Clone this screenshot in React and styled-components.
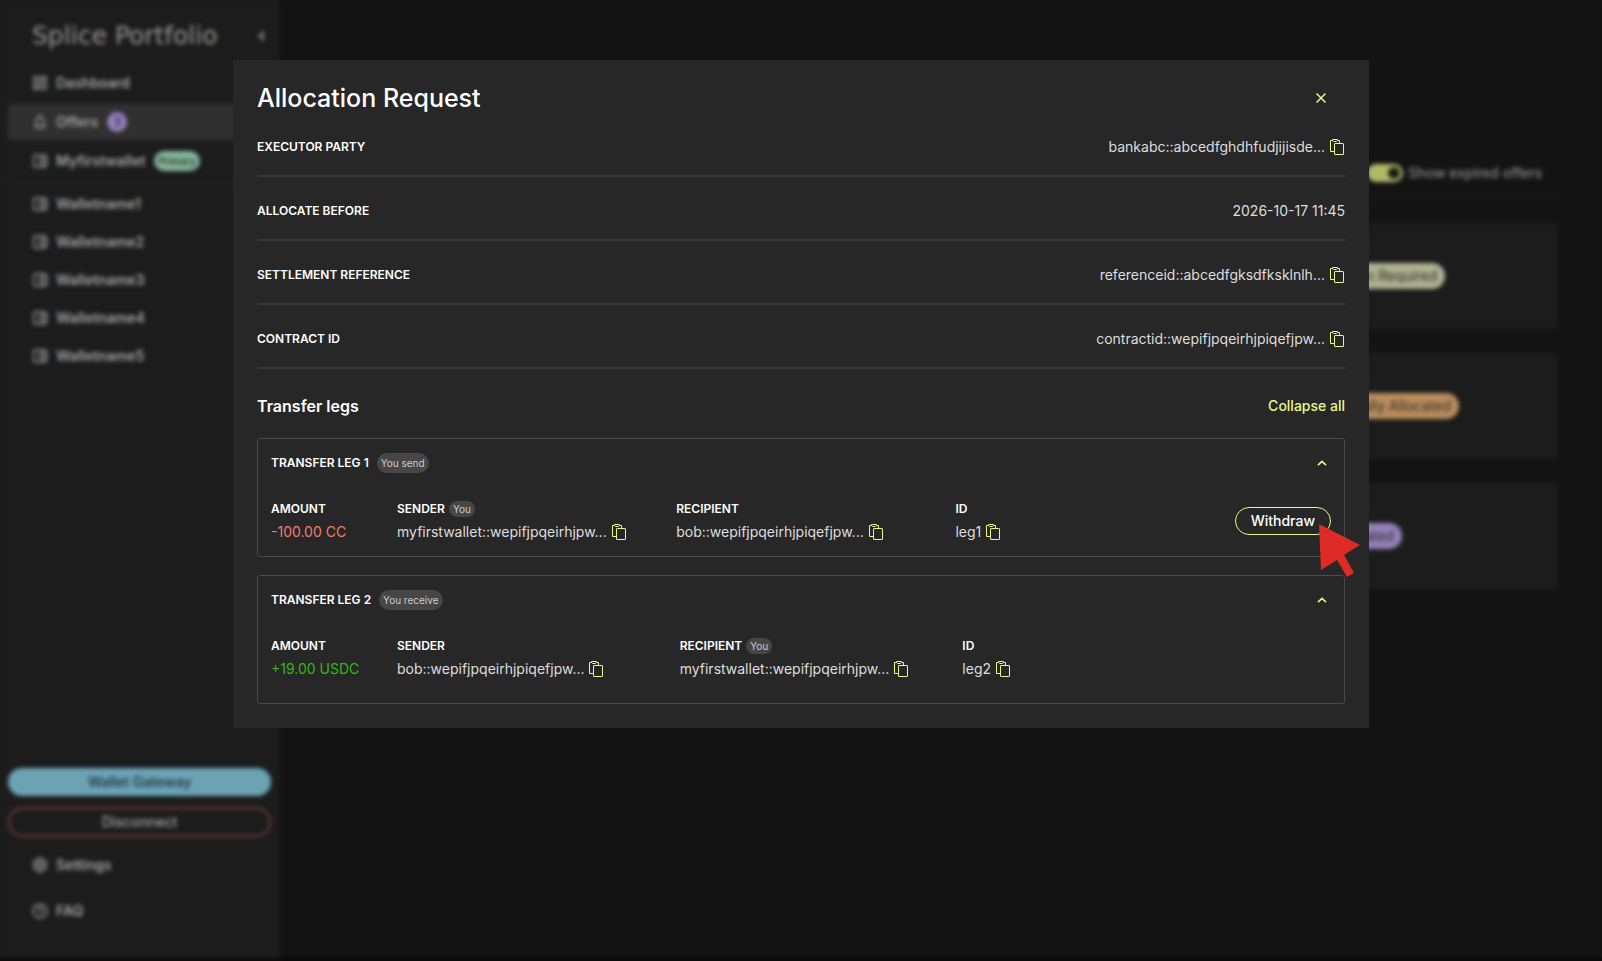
import { useState } from 'react';
import styled, { createGlobalStyle } from 'styled-components';
import {
  MdOutlineDashboard,
  MdNotificationsNone,
  MdOutlineAccountBalanceWallet,
  MdOutlineSettings,
  MdHelpOutline,
} from 'react-icons/md';

const GlobalStyle = createGlobalStyle`
  * {
    box-sizing: border-box;
  }
  body {
    margin: 0;
    background: #0b090a;
    font-family: Inter, "Liberation Sans", sans-serif;
    font-size: 14px;
    line-height: 20px;
    color: #ffffff;
  }
  button {
    font: inherit;
    color: inherit;
    background: none;
    border: none;
    padding: 0;
    cursor: pointer;
  }
  h1, h2, h3, dl, dd {
    margin: 0;
  }
`

// page behind the dialog
const Layout = styled.div`
  display: flex;
  height: 100vh;
  padding-bottom: 3px;
  overflow: hidden;
`
const Sidebar = styled.nav`
  display: flex;
  flex-direction: column;
  flex: 0 0 279px;
  padding: 20px 8px 27px;
  background: #1c1c1c;
  color: #a0a0a0;
`
const Brand = styled.div`
  display: flex;
  justify-content: space-between;
  align-items: center;
  height: 32px;
  margin-bottom: 13px;
  padding: 0 4px 0 24px;
  font-family: "DejaVu Sans", sans-serif;
  font-size: 25px;
  white-space: nowrap;
  color: #949494;
`
const NavItem = styled.a`
  display: flex;
  align-items: center;
  gap: 7px;
  height: 36px;
  margin-bottom: ${props => props.$gap || 2}px;
  padding-left: 23px;
  border-radius: 4px;
  background: ${props => (props.$active ? '#303030' : 'transparent')};
  color: inherit;
  font-weight: 600;
  text-decoration: none;

  svg {
    width: 18px;
    height: 18px;
  }
`
const Count = styled.span`
  width: 20px;
  height: 20px;
  margin-left: 2px;
  border-radius: 10px;
  background: #9480bb;
  color: #33294a;
  font-size: 12px;
  font-weight: 500;
  text-align: center;
`
const Primary = styled.span`
  margin-left: 2px;
  padding: 0 4px;
  border-radius: 10px;
  background: #84b399;
  color: #26382e;
  font-size: 10px;
  font-weight: 500;
`
const Divider = styled.hr`
  width: 100%;
  margin: 0 0 2px;
  border: none;
  border-top: 1px solid #2b2b2b;
`
const Spacer = styled.div`
  flex: 1;
`
const WideButton = styled.button`
  flex: none;
  height: ${props => (props.$outline ? 30 : 28)}px;
  margin-bottom: ${props => (props.$outline ? 10 : 11)}px;
  border-radius: 15px;
  border: ${props => (props.$outline ? '2px solid #6e3b36' : 'none')};
  background: ${props => (props.$outline ? 'transparent' : '#6ba3b5')};
  color: ${props => (props.$outline ? '#a0a0a0' : '#1f343b')};
  font-weight: 500;
`
const Main = styled.main`
  flex: 1;
  padding: 160px 44px 0;
  background: #131313;
`
const Filters = styled.div`
  display: flex;
  justify-content: flex-end;
  height: 39px;
  padding-right: 16px;
  border-bottom: 1px solid #222222;
  color: #858585;
`
const ToggleLabel = styled.label`
  display: flex;
  align-items: center;
  gap: 5px;
  height: 26px;
  font-weight: 500;
`
const Toggle = styled.input`
  appearance: none;
  width: 36px;
  height: 18px;
  margin: 0;
  padding: 3px;
  border-radius: 9px;
  background: #b0b968;

  &::before {
    content: '';
    display: block;
    width: 12px;
    height: 12px;
    margin-left: auto;
    border-radius: 6px;
    background: #1b1c12;
  }
`
const Offer = styled.article`
  display: flex;
  justify-content: flex-end;
  height: 106px;
  margin-top: 24px;
  padding-top: 15px;
  border-radius: 4px;
  background: #1c1c1c;
`
const OfferStatus = styled.div`
  flex: 0 0 234px;
  color: #a0a0a0;
  font-weight: 600;
`
const StatusChip = styled.span`
  display: block;
  width: fit-content;
  margin-top: 5px;
  padding: 3px 8px;
  border-radius: 13px;
  background: ${props => props.$color};
  color: #33312b;
  font-weight: 400;
`

// dialog
const Overlay = styled.div`
  position: fixed;
  inset: 0;
  padding: 60px 24px;
  backdrop-filter: blur(2px);
  overflow: auto;
`
const Modal = styled.section`
  max-width: 1136px;
  margin: 0 auto;
  padding: 22px 24px 24px;
  background: #272727;
`
const ModalHeader = styled.header`
  display: flex;
  justify-content: space-between;
  align-items: center;
  height: 32px;
  padding-right: 16px;
`
const Title = styled.h1`
  font-size: 25px;
  font-weight: 500;
  line-height: 32px;
`
const IconButton = styled.button`
  display: flex;
  align-items: center;
  justify-content: center;
  width: 16px;
  height: 16px;
  color: #e7f98a;
`
const Fields = styled.dl`
  margin-top: 1px;
`
const Field = styled.div`
  display: flex;
  justify-content: space-between;
  align-items: center;
  height: 64px;
  padding-top: 6px;
  border-bottom: 2px solid #383838;

  &:first-child {
    height: 62px;
    padding-top: 4px;
  }
`
const Label = styled.dt`
  display: flex;
  align-items: center;
  gap: 4px;
  height: 20px;
  font-size: 12px;
  font-weight: 600;
  text-transform: uppercase;
`
const Value = styled.dd`
  display: flex;
  align-items: center;
  gap: 4px;
  color: ${props => props.$color || '#dedede'};
  white-space: nowrap;
`
const LegsHeader = styled.div`
  display: flex;
  justify-content: space-between;
  align-items: center;
  padding: 27px 0 22px;
`
const SubTitle = styled.h2`
  font-size: 16px;
  font-weight: 600;
  line-height: 20px;
`
const TextButton = styled.button`
  color: #e7f98a;
  font-weight: 500;
`
const Leg = styled.article`
  padding: 14px 13px ${props => (props.$roomy ? 24 : 14)}px;
  border: 1px solid #4a4a4a;
  border-radius: 3px;

  & + & {
    margin-top: 18px;
  }
`
const LegHeader = styled.header`
  display: flex;
  align-items: center;
  gap: 8px;
  height: 20px;
`
const LegName = styled.h3`
  font-size: 12px;
  font-weight: 600;
  text-transform: uppercase;
`
const Chip = styled.span`
  padding: 0 4px;
  border-radius: 10px;
  background: #464646;
  color: #cccccc;
  font-size: 10px;
  font-weight: 400;
  line-height: ${props => (props.$small ? 16 : 20)}px;
  text-transform: none;
`
const Collapse = styled(IconButton)`
  width: 18px;
  margin-left: auto;
`
const LegDetails = styled.dl`
  display: grid;
  grid-template-columns: 110px repeat(3, 1fr) minmax(86px, auto);
  column-gap: 16px;
  align-items: center;
  margin-top: 26px;
`
const Detail = styled.div`
  display: grid;
  row-gap: 3px;
`
const Action = styled.div`
  position: relative;
`
const Withdraw = styled.button`
  display: block;
  height: 28px;
  padding: 0 15px;
  border: 1px solid #e7f98a;
  border-radius: 14px;
  font-weight: 500;
`
const Pointer = styled.svg`
  position: absolute;
  left: 84px;
  top: 17px;
  width: 41px;
  height: 54px;
  pointer-events: none;
`

const wallets = ['Walletname1', 'Walletname2', 'Walletname3', 'Walletname4', 'Walletname5']

const offers = [
  { status: 'Action Required', color: '#adb191' },
  { status: 'Partially Allocated', color: '#b98c5c' },
  { status: 'Allocated', color: '#9480bb' },
]

const fields = [
  { label: 'Executor party', value: 'bankabc::abcedfghdhfudjijisde...', copy: true },
  { label: 'Allocate before', value: '2026-10-17 11:45' },
  { label: 'Settlement reference', value: 'referenceid::abcedfgksdfksklnlh...', copy: true },
  { label: 'Contract ID', value: 'contractid::wepifjpqeirhjpiqefjpw...', copy: true },
]

const legs = [
  {
    name: 'Transfer leg 1',
    direction: 'You send',
    amount: '-100.00 CC',
    color: '#f47b6c',
    sender: 'myfirstwallet::wepifjpqeirhjpw...',
    recipient: 'bob::wepifjpqeirhjpiqefjpw...',
    you: 'sender',
    id: 'leg1',
    canWithdraw: true,
  },
  {
    name: 'Transfer leg 2',
    direction: 'You receive',
    amount: '+19.00 USDC',
    color: '#35b80c',
    sender: 'bob::wepifjpqeirhjpiqefjpw...',
    recipient: 'myfirstwallet::wepifjpqeirhjpw...',
    you: 'recipient',
    id: 'leg2',
  },
]

function CopyButton({ text }) {
  return (
    <IconButton aria-label="Copy" onClick={() => navigator.clipboard.writeText(text)}>
      <svg width="14" height="16" viewBox="0 0 14 16" fill="none" stroke="currentColor">
        <path d="M4.5 12.5H.5V1.5H2.5M7.5 1.5H9.5V4" />
        <path d="M2.5 .5H7.5V1.5L6.5 2.5H3.5L2.5 1.5Z" />
        <rect x="4.5" y="4.5" width="9" height="11" rx=".5" />
      </svg>
    </IconButton>
  )
}

function DetailItem({ label, value, color, you, copy }) {
  return (
    <Detail>
      <Label>
        {label}
        {you && <Chip $small>You</Chip>}
      </Label>
      <Value $color={color}>
        {value}
        {copy && <CopyButton text={value} />}
      </Value>
    </Detail>
  )
}

function TransferLeg({ leg, open, onToggle }) {
  return (
    <Leg $roomy={!leg.canWithdraw}>
      <LegHeader>
        <LegName>{leg.name}</LegName>
        <Chip>{leg.direction}</Chip>
        <Collapse aria-label="Toggle leg" onClick={onToggle}>
          <svg width="10" height="6" viewBox="0 0 10 6" fill="none" stroke="currentColor" strokeWidth="1.6">
            <path d="M1 5.2L5 1.4L9 5.2" />
          </svg>
        </Collapse>
      </LegHeader>
      {open && (
        <LegDetails>
          <DetailItem label="Amount" value={leg.amount} color={leg.color} />
          <DetailItem label="Sender" value={leg.sender} you={leg.you === 'sender'} copy />
          <DetailItem label="Recipient" value={leg.recipient} you={leg.you === 'recipient'} copy />
          <DetailItem label="ID" value={leg.id} copy />
          {leg.canWithdraw && (
            <Action>
              <Withdraw>Withdraw</Withdraw>
              <Pointer viewBox="0 0 41 54">
                <path d="M0 0L41 21L25 31L35 49L28 53L18 36L2 46Z" fill="#de2b26" />
              </Pointer>
            </Action>
          )}
        </LegDetails>
      )}
    </Leg>
  )
}

function App() {
  const [open, setOpen] = useState({ leg1: true, leg2: true })
  const [showExpired, setShowExpired] = useState(true)

  const collapseAll = () => setOpen({})

  return (
    <>
      <GlobalStyle />
      <Layout>
        <Sidebar>
          <Brand>
            Splice Portfolio
            <svg width="10" height="12" viewBox="0 0 10 12" fill="none" stroke="currentColor" strokeWidth="2.4">
              <path d="M7 2L3 6L7 10" />
            </svg>
          </Brand>
          <NavItem href="#dashboard" $gap={3}><MdOutlineDashboard />Dashboard</NavItem>
          <NavItem href="#offers" $active $gap={3}>
            <MdNotificationsNone />Offers<Count>3</Count>
          </NavItem>
          <NavItem href="#primary" $gap={4}>
            <MdOutlineAccountBalanceWallet />Myfirstwallet<Primary>Primary</Primary>
          </NavItem>
          <Divider />
          {wallets.map(name => (
            <NavItem key={name} href={`#${name}`}><MdOutlineAccountBalanceWallet />{name}</NavItem>
          ))}
          <Spacer />
          <WideButton>Wallet Gateway</WideButton>
          <WideButton $outline>Disconnect</WideButton>
          <NavItem href="#settings" $gap={10}><MdOutlineSettings />Settings</NavItem>
          <NavItem href="#faq"><MdHelpOutline />FAQ</NavItem>
        </Sidebar>

        <Main>
          <Filters>
            <ToggleLabel>
              <Toggle
                type="checkbox"
                checked={showExpired}
                onChange={e => setShowExpired(e.target.checked)}
              />
              Show expired offers
            </ToggleLabel>
          </Filters>
          {offers.map(offer => (
            <Offer key={offer.status}>
              <OfferStatus>
                Status
                <StatusChip $color={offer.color}>{offer.status}</StatusChip>
              </OfferStatus>
            </Offer>
          ))}
        </Main>
      </Layout>

      <Overlay>
        <Modal role="dialog" aria-modal="true" aria-labelledby="dialog-title">
          <ModalHeader>
            <Title id="dialog-title">Allocation Request</Title>
            <IconButton aria-label="Close">
              <svg width="10" height="10" viewBox="0 0 10 10" stroke="currentColor" strokeWidth="1.5">
                <path d="M.5 .5L9.5 9.5M9.5 .5L.5 9.5" />
              </svg>
            </IconButton>
          </ModalHeader>

          <Fields>
            {fields.map(field => (
              <Field key={field.label}>
                <Label>{field.label}</Label>
                <Value>
                  {field.value}
                  {field.copy && <CopyButton text={field.value} />}
                </Value>
              </Field>
            ))}
          </Fields>

          <LegsHeader>
            <SubTitle>Transfer legs</SubTitle>
            <TextButton onClick={collapseAll}>Collapse all</TextButton>
          </LegsHeader>
          {legs.map(leg => (
            <TransferLeg
              key={leg.id}
              leg={leg}
              open={open[leg.id]}
              onToggle={() => setOpen({ ...open, [leg.id]: !open[leg.id] })}
            />
          ))}
        </Modal>
      </Overlay>
    </>
  )
}

export default App
